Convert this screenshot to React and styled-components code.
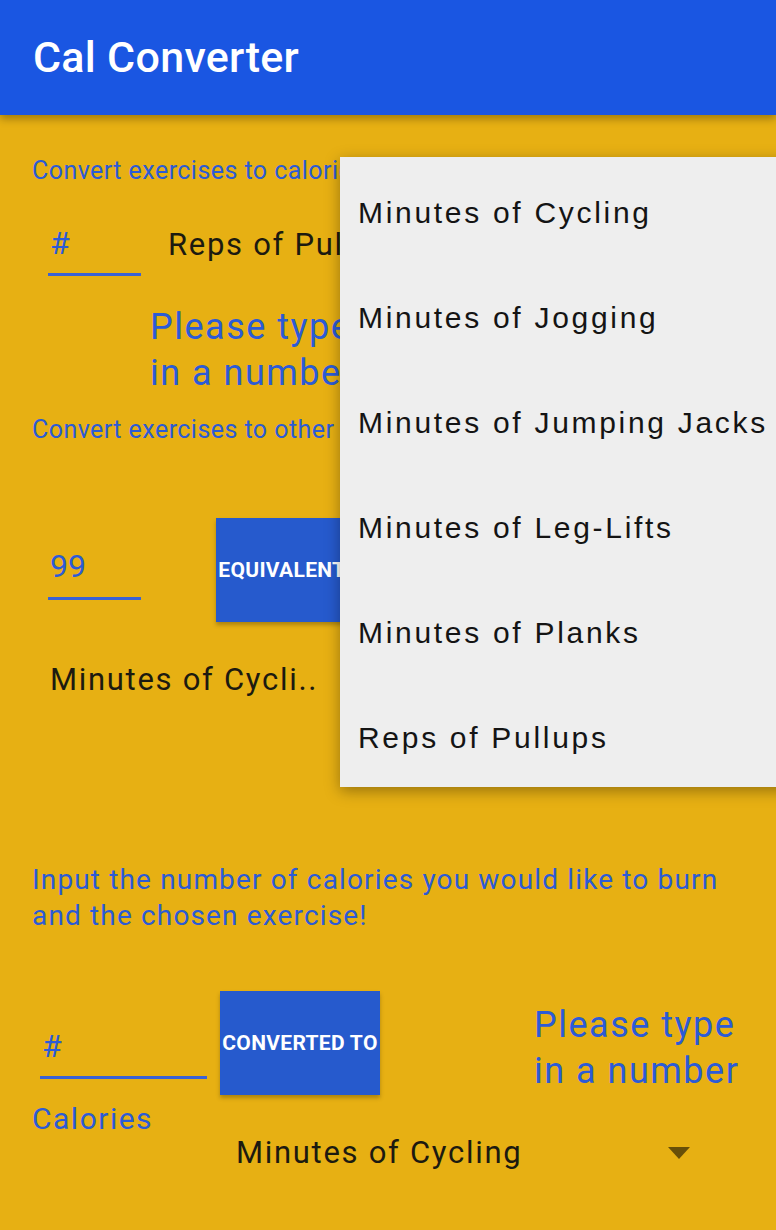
import React from 'react';
import styled, { createGlobalStyle } from 'styled-components';

const yellow = '#e7b013';
const blue = '#2c5bd6';
const buttonBlue = '#265acd';

const exercises = [
  'Minutes of Cycling',
  'Minutes of Jogging',
  'Minutes of Jumping Jacks',
  'Minutes of Leg-Lifts',
  'Minutes of Planks',
  'Reps of Pullups'
];

const GlobalStyle = createGlobalStyle`
  html, body {
    margin: 0;
    padding: 0;
  }
  body {
    width: 776px;
    height: 1230px;
    overflow: hidden;
    background: ${yellow};
    font-family: Roboto, "Noto Sans", sans-serif;
  }
`;

const App = () => {
  return (
    <Screen>
      <GlobalStyle />
      <AppBar>
        <Title>Cal Converter</Title>
      </AppBar>

      <Content>
        {/* Exercise -> calories */}
        <Hint>Convert exercises to calories</Hint>
        <Row style={{ marginTop: 36 }}>
          <NumberField width={93} offset={16} placeholder="#" />
          <SpinnerText lift style={{ marginLeft: 27 }}>Reps of Pullups</SpinnerText>
        </Row>
        <Warning indent={118} style={{ marginTop: 28 }}>Please type<br />in a number</Warning>

        {/* Exercise -> exercise */}
        <Hint style={{ marginTop: 19 }}>Convert exercises to other exercises</Hint>
        <Row style={{ marginTop: 73 }}>
          <NumberField width={93} offset={16} tall defaultValue="99" />
          <ActionButton width={164} style={{ marginLeft: 75 }}>EQUIVALENT TO</ActionButton>
        </Row>
        <SpinnerText style={{ marginTop: 39, marginLeft: 18 }}>Minutes of Cycli..</SpinnerText>

        {/* Calories -> exercise */}
        <Hint wide style={{ marginTop: 164 }}>
          Input the number of calories you would like to burn<br />and the chosen exercise!
        </Hint>
        <CalorieGrid>
          <NumberField width={167} offset={8} bottom placeholder="#" />
          <ActionButton width={160}>CONVERTED TO</ActionButton>
          <Warning indent={141} style={{ paddingTop: 10 }}>
            Please type<br />in a number
          </Warning>
          <Unit>Calories</Unit>
          <Spinner>
            <SpinnerText>Minutes of Cycling</SpinnerText>
            <svg width="22" height="12" viewBox="0 0 22 12">
              <polygon points="0,0 22,0 11,12" fill="rgba(0,0,0,0.55)" />
            </svg>
          </Spinner>
        </CalorieGrid>
      </Content>

      <Menu>
        {exercises.map(name => (
          <MenuItem key={name}>{name}</MenuItem>
        ))}
      </Menu>
    </Screen>
  );
};

export default App;

const Screen = styled.div`
  position: relative;
  width: 776px;
  height: 1230px;
  overflow: hidden;
  background: ${yellow};
`;

const AppBar = styled.header`
  height: 115px;
  display: flex;
  align-items: center;
  padding-left: 33px;
  background: #1a56e2;
  box-shadow: 0 4px 8px rgba(0, 0, 0, 0.3);
  position: relative;
  z-index: 1;
`;

const Title = styled.h1`
  margin: 0;
  margin-top: -2px;
  color: #fff;
  font-size: 43px;
  font-weight: 500;
  letter-spacing: 0.3px;
`;

const Content = styled.main`
  display: flex;
  flex-direction: column;
  padding: 41px 32px 0;
`;

const Hint = styled.div`
  color: ${blue};
  font-size: ${p => (p.wide ? 28 : 25)}px;
  line-height: ${p => (p.wide ? 36 : 30)}px;
  letter-spacing: ${p => (p.wide ? 1.15 : 0.45)}px;
  white-space: nowrap;
`;

const Row = styled.div`
  display: flex;
  align-items: center;
`;

const NumberField = styled.input.attrs({ type: 'text' })`
  box-sizing: border-box;
  width: ${p => p.width}px;
  height: ${p => (p.tall ? 60 : 54)}px;
  margin-left: ${p => p.offset}px;
  align-self: ${p => (p.bottom ? 'end' : 'center')};
  margin-bottom: ${p => (p.bottom ? 16 : 0)}px;
  padding: 0 2px ${p => (p.tall ? 6 : 10)}px;
  border: none;
  border-bottom: 3px solid #3a62d6;
  background: transparent;
  outline: none;
  color: ${blue};
  font-family: Roboto, sans-serif;
  font-size: 32px;
  &::placeholder {
    color: ${blue};
    opacity: 1;
  }
`;

const SpinnerText = styled.span`
  margin-bottom: ${p => (p.lift ? 10 : 0)}px;
  color: #1c1a10;
  font-size: 31px;
  letter-spacing: 1.7px;
  white-space: nowrap;
`;

const Warning = styled.div`
  margin-left: ${p => p.indent}px;
  color: ${blue};
  font-size: 36px;
  line-height: 46px;
  letter-spacing: 1.5px;
  white-space: nowrap;
`;

const ActionButton = styled.button`
  box-sizing: border-box;
  width: ${p => p.width}px;
  height: 104px;
  padding: 0 1px;
  border: none;
  background: ${buttonBlue};
  box-shadow: 0 3px 4px rgba(0, 0, 0, 0.25);
  color: #fff;
  font-family: Roboto, sans-serif;
  font-size: 21px;
  font-weight: 700;
  letter-spacing: 0.3px;
  white-space: nowrap;
  overflow: hidden;
`;

const CalorieGrid = styled.div`
  display: grid;
  grid-template-columns: auto auto 1fr;
  align-items: center;
  column-gap: 13px;
  margin-top: 57px;
`;

const Unit = styled.div`
  align-self: start;
  margin-top: 6px;
  color: ${blue};
  font-size: 30px;
  letter-spacing: 1.5px;
`;

const Spinner = styled.div`
  grid-column: 2 / 4;
  display: flex;
  align-items: center;
  justify-content: space-between;
  margin-top: 39px;
  padding: 0 54px 0 16px;
`;

const Menu = styled.ul`
  position: absolute;
  top: 157px;
  left: 340px;
  width: 480px;
  margin: 0;
  padding: 0;
  list-style: none;
  background: #eeeeee;
  box-shadow: 0 4px 14px rgba(0, 0, 0, 0.35);
  z-index: 2;
`;

const MenuItem = styled.li`
  box-sizing: border-box;
  height: 105px;
  padding: 6px 0 0 18px;
  display: flex;
  align-items: center;
  color: #141414;
  font-family: "Liberation Sans", Arial, sans-serif;
  font-size: 30px;
  letter-spacing: 2.7px;
  white-space: nowrap;
`;
